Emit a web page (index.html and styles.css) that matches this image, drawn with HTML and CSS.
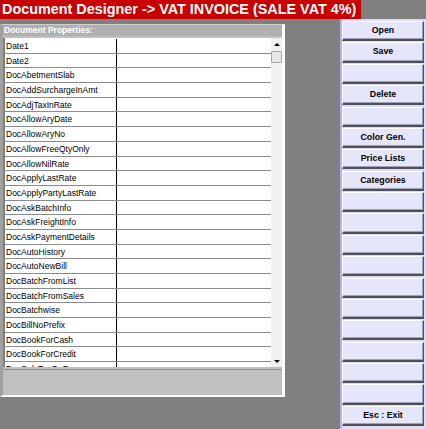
FILE: index.html
```html
<!DOCTYPE html>
<html>
<head>
<meta charset="utf-8">
<link rel="stylesheet" href="styles.css">
</head>
<body>
<div class="screen">
  <div class="title">Document Designer -&gt; VAT INVOICE (SALE VAT 4%)</div>
  <div class="main">
    <div class="left">
      <div class="panel">
        <div class="panel-head">Document Properties:</div>
        <div class="grid-wrap">
          <div class="grid">
            <div class="row"><div class="c1">Date1</div><div class="c2"></div></div>
            <div class="row"><div class="c1">Date2</div><div class="c2"></div></div>
            <div class="row"><div class="c1">DocAbetmentSlab</div><div class="c2"></div></div>
            <div class="row"><div class="c1">DocAddSurchargeInAmt</div><div class="c2"></div></div>
            <div class="row"><div class="c1">DocAdjTaxInRate</div><div class="c2"></div></div>
            <div class="row"><div class="c1">DocAllowAryDate</div><div class="c2"></div></div>
            <div class="row"><div class="c1">DocAllowAryNo</div><div class="c2"></div></div>
            <div class="row"><div class="c1">DocAllowFreeQtyOnly</div><div class="c2"></div></div>
            <div class="row"><div class="c1">DocAllowNilRate</div><div class="c2"></div></div>
            <div class="row"><div class="c1">DocApplyLastRate</div><div class="c2"></div></div>
            <div class="row"><div class="c1">DocApplyPartyLastRate</div><div class="c2"></div></div>
            <div class="row"><div class="c1">DocAskBatchInfo</div><div class="c2"></div></div>
            <div class="row"><div class="c1">DocAskFreightInfo</div><div class="c2"></div></div>
            <div class="row"><div class="c1">DocAskPaymentDetails</div><div class="c2"></div></div>
            <div class="row"><div class="c1">DocAutoHistory</div><div class="c2"></div></div>
            <div class="row"><div class="c1">DocAutoNewBill</div><div class="c2"></div></div>
            <div class="row"><div class="c1">DocBatchFromList</div><div class="c2"></div></div>
            <div class="row"><div class="c1">DocBatchFromSales</div><div class="c2"></div></div>
            <div class="row"><div class="c1">DocBatchwise</div><div class="c2"></div></div>
            <div class="row"><div class="c1">DocBillNoPrefix</div><div class="c2"></div></div>
            <div class="row"><div class="c1">DocBookForCash</div><div class="c2"></div></div>
            <div class="row"><div class="c1">DocBookForCredit</div><div class="c2"></div></div>
            <div class="row"><div class="c1">DocCalcTaxOnFree</div><div class="c2"></div></div>
          </div>
          <div class="scrollbar">
            <div class="arrow up"></div>
            <div class="thumb"></div>
            <div class="track"></div>
            <div class="arrow down"></div>
          </div>
        </div>
        <div class="panel-foot"></div>
      </div>
    </div>
    <div class="buttons">
      <div class="btn">Open</div>
      <div class="btn">Save</div>
      <div class="btn"></div>
      <div class="btn">Delete</div>
      <div class="btn"></div>
      <div class="btn">Color Gen.</div>
      <div class="btn">Price Lists</div>
      <div class="btn">Categories</div>
      <div class="btn"></div>
      <div class="btn"></div>
      <div class="btn"></div>
      <div class="btn"></div>
      <div class="btn"></div>
      <div class="btn"></div>
      <div class="btn"></div>
      <div class="btn"></div>
      <div class="btn"></div>
      <div class="btn"></div>
      <div class="btn">Esc : Exit</div>
    </div>
  </div>
</div>
</body>
</html>
```
FILE: styles.css
```css
html, body {
  margin: 0;
  padding: 0;
  background: #808080;
}
.screen {
  width: 426px;
  height: 429px;
  overflow: hidden;
  background: #808080;
  font-family: "Liberation Sans", Arial, sans-serif;
}
.title {
  width: 361px;
  height: 19px;
  box-sizing: border-box;
  background: #c80000;
  color: #ffffff;
  font-weight: bold;
  font-size: 14.4px;
  line-height: 19px;
  padding-left: 2px;
  white-space: nowrap;
  overflow: hidden;
}
.main {
  display: flex;
  height: 410px;
}
.left {
  width: 340px;
  padding-top: 5px;
}
.panel {
  width: 285px;
  height: 373px;
  box-sizing: border-box;
  background: #c0c0c0;
  border-left: 3px solid #a0a0a0;
  border-right: 3px solid #ffffff;
  border-bottom: 2px solid #ffffff;
  border-top: 1px solid #d0d0d0;
  display: flex;
  flex-direction: column;
}
.panel-head {
  height: 11px;
  background: #b0b0b0;
  color: #ffffff;
  font-weight: bold;
  font-size: 8.5px;
  line-height: 11px;
  padding-left: 1px;
  white-space: nowrap;
}
.grid-wrap {
  margin-top: 2px;
  height: 329px;
  display: flex;
  border-left: 2px solid #808080;
  background: #ffffff;
}
.grid {
  width: 266px;
  overflow: hidden;
  padding-top: 1px;
}
.row {
  display: flex;
  height: 14.7px;
  box-sizing: border-box;
  border-bottom: 1px solid #8c8c8c;
}
.c1 {
  width: 110px;
  border-right: 1px solid #000000;
  font-size: 8.5px;
  line-height: 11.7px;
  padding-top: 2px;
  padding-left: 1px;
  white-space: nowrap;
  overflow: hidden;
  color: #000;
}
.c2 {
  flex: 1;
}
.scrollbar {
  width: 11px;
  background: #f0f0f0;
  display: flex;
  flex-direction: column;
  align-items: center;
}
.arrow {
  width: 0;
  height: 0;
  border-left: 3px solid transparent;
  border-right: 3px solid transparent;
}
.arrow.up {
  margin-top: 5px;
  border-bottom: 3px solid #000;
}
.arrow.down {
  margin-bottom: 4px;
  border-top: 3px solid #000;
}
.thumb {
  margin-top: 5px;
  width: 9px;
  height: 10px;
  background: #e8e8e8;
  border: 1px solid #a8a8a8;
  border-radius: 1px;
}
.track {
  flex: 1;
}
.panel-foot {
  margin-top: 2px;
  flex: 1;
  border-top: 1px solid #909090;
  background: #c0c0c0;
}
.buttons {
  width: 86px;
  box-sizing: border-box;
  background: #dcdcf6;
  border-left: 2px solid #b4b4ee;
  padding-top: 2px;
  padding-right: 2px;
  display: flex;
  flex-direction: column;
  gap: 1.2px;
}
.btn {
  height: 20.2px;
  flex: none;
  box-sizing: border-box;
  background: #e6e6fa;
  border-top: 1px solid #ffffff;
  border-left: 1px solid #ffffff;
  border-right: 1px solid #505050;
  border-bottom: 2px solid #505050;
  box-shadow: inset -1px -1px 0 #a0a0c0;
  font-weight: bold;
  font-size: 8.8px;
  line-height: 17px;
  text-align: center;
  color: #000;
  white-space: nowrap;
}
```
